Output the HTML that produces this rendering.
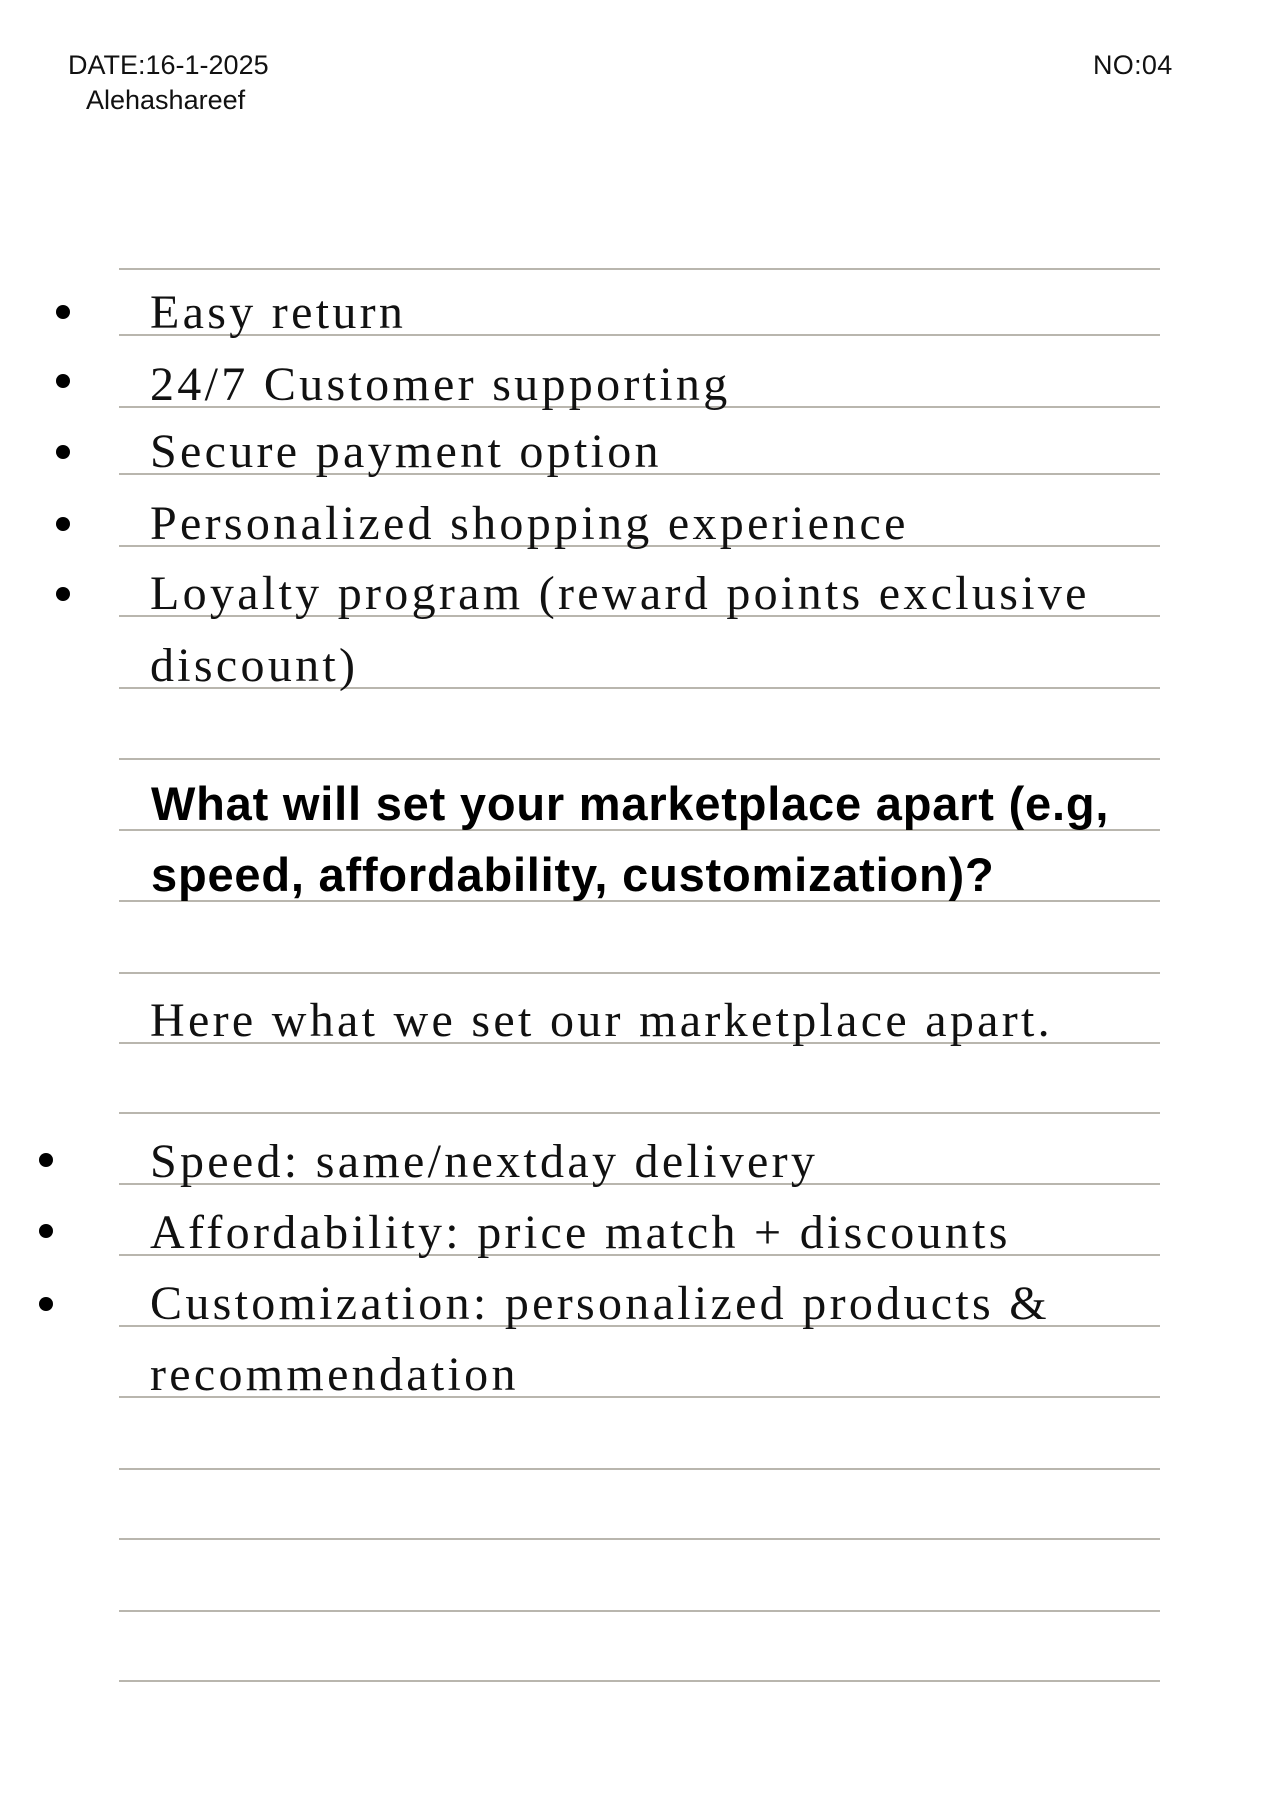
<!DOCTYPE html>
<html><head><meta charset="utf-8"><style>
html,body{margin:0;padding:0;background:#fff;}
body{width:1280px;height:1810px;position:relative;overflow:hidden;}
.l{position:absolute;left:119px;width:1041px;height:2px;background:#b9b6ae;}
.s{position:absolute;left:150px;font-family:"Liberation Serif",serif;font-size:48px;line-height:48px;color:#111;white-space:nowrap;letter-spacing:3.3px;}
.b{position:absolute;left:151px;font-family:"Liberation Sans",sans-serif;font-weight:bold;font-size:47px;line-height:48px;color:#000;white-space:nowrap;letter-spacing:0.8px;}
.d{position:absolute;width:14px;height:14px;border-radius:50%;background:#000;}
.h{position:absolute;font-family:"Liberation Sans",sans-serif;font-size:27px;color:#111;line-height:30px;}
</style></head><body>
<div class="h" style="left:68px;top:50px">DATE:16-1-2025</div>
<div class="h" style="left:86px;top:85px">Alehashareef</div>
<div class="h" style="left:1093px;top:50px;letter-spacing:0.3px">NO:04</div>

<div class="l" style="top:268px"></div>
<div class="l" style="top:334px"></div>
<div class="l" style="top:406px"></div>
<div class="l" style="top:473px"></div>
<div class="l" style="top:545px"></div>
<div class="l" style="top:615px"></div>
<div class="l" style="top:687px"></div>
<div class="l" style="top:758px"></div>
<div class="l" style="top:829px"></div>
<div class="l" style="top:900px"></div>
<div class="l" style="top:972px"></div>
<div class="l" style="top:1042px"></div>
<div class="l" style="top:1112px"></div>
<div class="l" style="top:1183px"></div>
<div class="l" style="top:1254px"></div>
<div class="l" style="top:1325px"></div>
<div class="l" style="top:1396px"></div>
<div class="l" style="top:1468px"></div>
<div class="l" style="top:1538px"></div>
<div class="l" style="top:1610px"></div>
<div class="l" style="top:1680px"></div>

<div class="d" style="left:56px;top:305px"></div>
<div class="d" style="left:56px;top:374px"></div>
<div class="d" style="left:56px;top:445px"></div>
<div class="d" style="left:56px;top:517px"></div>
<div class="d" style="left:56px;top:587px"></div>
<div class="d" style="left:39px;top:1153px"></div>
<div class="d" style="left:39px;top:1224px"></div>
<div class="d" style="left:39px;top:1297px"></div>

<div class="s" style="top:289px">Easy return</div>
<div class="s" style="top:361px">24/7 Customer supporting</div>
<div class="s" style="top:428px">Secure payment option</div>
<div class="s" style="top:500px">Personalized shopping experience</div>
<div class="s" style="top:570px">Loyalty program (reward points exclusive</div>
<div class="s" style="top:642px">discount)</div>
<div class="b" style="top:780px">What will set your marketplace apart (e.g,</div>
<div class="b" style="top:851px">speed, affordability, customization)?</div>
<div class="s" style="top:997px">Here what we set our marketplace apart.</div>
<div class="s" style="top:1138px">Speed: same/nextday delivery</div>
<div class="s" style="top:1209px">Affordability: price match + discounts</div>
<div class="s" style="top:1280px">Customization: personalized products &amp;</div>
<div class="s" style="top:1351px">recommendation</div>
</body></html>
